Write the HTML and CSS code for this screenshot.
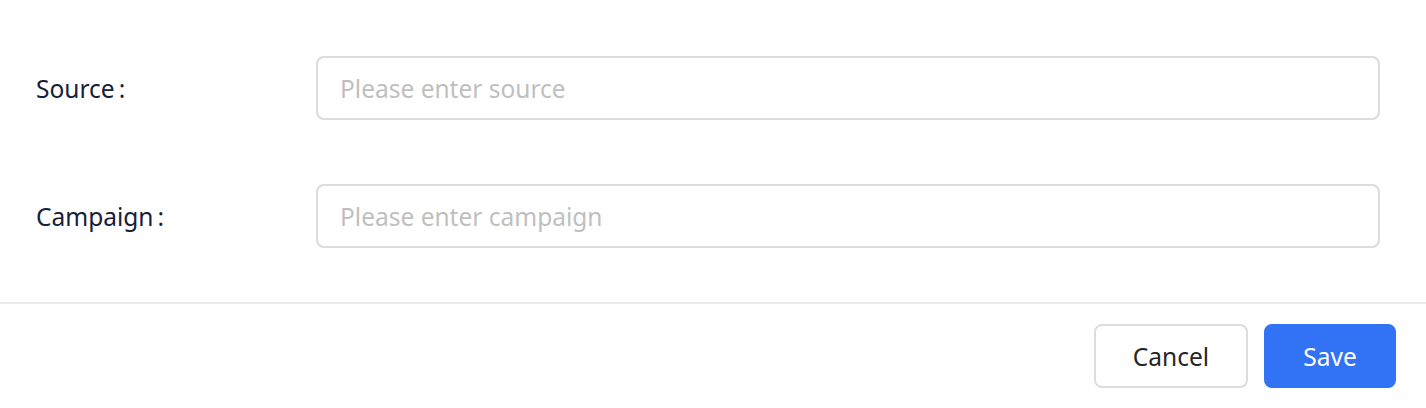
FILE: index.html
```html
<!DOCTYPE html>
<html>
<head>
<meta charset="utf-8">
<link rel="stylesheet" href="styles.css">
</head>
<body>
<div class="dialog">
  <form class="form">
    <div class="row">
      <label class="label">Source<span class="colon">:</span></label>
      <input class="input" type="text" placeholder="Please enter source">
    </div>
    <div class="row">
      <label class="label">Campaign<span class="colon">:</span></label>
      <input class="input" type="text" placeholder="Please enter campaign">
    </div>
  </form>
  <div class="footer">
    <button class="btn btn-default" type="button">Cancel</button>
    <button class="btn btn-primary" type="button">Save</button>
  </div>
</div>
</body>
</html>
```

FILE: styles.css
```css
html, body {
  margin: 0;
  padding: 0;
  background: #ffffff;
}
body {
  font-family: "Noto Sans", "Open Sans", sans-serif;
  width: 1426px;
  height: 408px;
  overflow: hidden;
}
.dialog {
  display: flex;
  flex-direction: column;
}
.form {
  display: flex;
  flex-direction: column;
  gap: 64px;
  padding: 56px 46px 54px 36px;
  border-bottom: 2px solid #ececec;
}
.row {
  display: flex;
  align-items: center;
}
.label {
  width: 280px;
  flex: none;
  font-size: 24.5px;
  color: #152039;
}
.colon {
  margin-left: 4px;
}
.input {
  flex: 1;
  height: 64px;
  box-sizing: border-box;
  border: 2px solid #dcdcdc;
  border-radius: 8px;
  padding: 0 22px;
  font-family: inherit;
  font-size: 24.5px;
  color: #152039;
  outline: none;
  background: #fff;
}
.input::placeholder {
  color: #bfbfbf;
}
.footer {
  display: flex;
  justify-content: flex-end;
  gap: 16px;
  padding: 20px 30px 20px 0;
}
.btn {
  height: 64px;
  box-sizing: border-box;
  border-radius: 8px;
  font-family: inherit;
  font-size: 24.5px;
  cursor: pointer;
  padding: 0;
}
.btn-default {
  width: 154px;
  background: #fff;
  border: 2px solid #dcdcdc;
  color: #262626;
}
.btn-primary {
  width: 132px;
  background: #3273f6;
  border: 2px solid #3273f6;
  color: #fff;
}
```
